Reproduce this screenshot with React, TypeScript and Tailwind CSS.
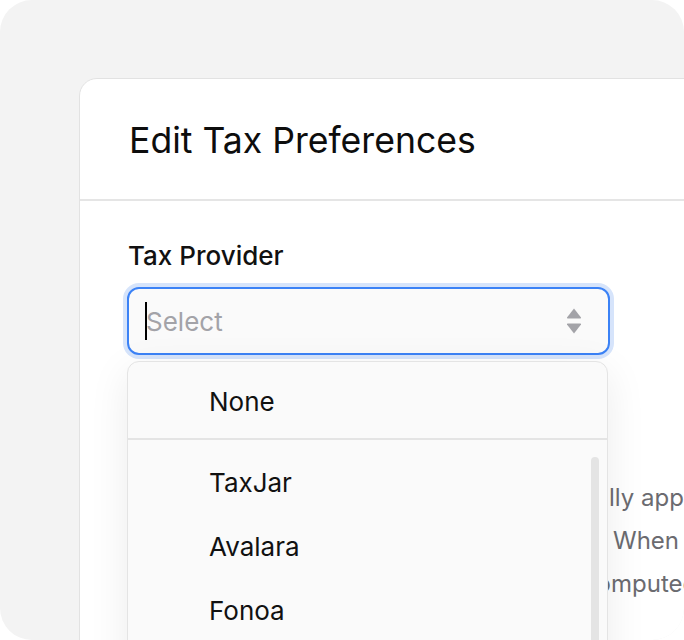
import React from "react";

const providers = ["TaxJar", "Avalara", "Fonoa"];

// the start of each line sits under the open dropdown
const descLines = [
  { lead: "Taxes are automatica", tail: "lly applied to every order", w: "w-[482px]" },
  { lead: "using the shipping address.", tail: "When enabled,", w: "w-[486px] pr-[14px]" },
  { lead: "rates are fetched and co", tail: "mputed at checkout", w: "w-[484px]" },
];

export default function App() {
  return (
    <div className="w-[684px] h-[640px] bg-white" style={{ fontFamily: "Inter, 'Noto Sans', sans-serif" }}>
      <div className="w-full h-full rounded-[32px] bg-[#f3f3f3] overflow-hidden pl-[79px] pt-[78px]">
        <div className="w-[720px] h-[700px] bg-white border border-[#e2e2e2] rounded-tl-[18px] overflow-hidden">
          <div className="h-[122px] flex items-center pl-[49px] border-b-2 border-[#e5e5e5]">
            <h1 className="text-[35.6px] text-[#0d0d0d] leading-[44px] mt-[4px]">Edit Tax Preferences</h1>
          </div>

          <div className="pl-[47px] pt-[38px]">
            <label className="block text-[26px] font-medium text-[#111111] leading-[34px] pl-[1px]">Tax Provider</label>

            <div className="relative mt-[14px] w-[483px]">
              <div className="h-[68px] rounded-[12px] border-2 border-[#3b82f6] bg-[#fafafa] ring-4 ring-[#d6e4fb] flex items-center pl-[16px] pr-[26px]">
                <span className="w-[2px] h-[38px] bg-black" />
                <span className="flex-1 text-[26px] text-[#a3a3a8] -ml-[1px]">Select</span>
                <svg width="16" height="28" viewBox="0 0 16 28" fill="#a3a3a8">
                  <path d="M8 1.5 L15 10.5 Q15.5 11.5 14 11.5 L2 11.5 Q0.5 11.5 1 10.5 Z" />
                  <path d="M8 26.5 L15 17.5 Q15.5 16.5 14 16.5 L2 16.5 Q0.5 16.5 1 17.5 Z" />
                </svg>
              </div>

              <div className="absolute left-0 right-[2px] top-[74px] z-10 h-[400px] rounded-[12px] border border-[#e4e4e4] bg-[#fafafa] shadow-[0_10px_40px_rgba(0,0,0,0.08)]">
                <div className="h-[78px] flex items-center pl-[81px] pt-[3px] border-b-2 border-[#e4e4e4] text-[26px] text-[#111111]">
                  None
                </div>
                <div className="relative pt-[10px]">
                  {providers.map((p) => (
                    <div key={p} className="h-[64px] flex items-center pl-[81px] text-[26px] text-[#111111]">
                      {p}
                    </div>
                  ))}
                  <div className="absolute right-[8px] top-[17px] w-[8px] h-[300px] rounded-full bg-[#e4e4e4]" />
                </div>
              </div>
            </div>

            <div className="mt-[121px] text-[24px] leading-[43px] text-[#6b6b70] whitespace-nowrap">
              {descLines.map((l) => (
                <div key={l.tail} className="flex">
                  <span className={`${l.w} shrink-0 text-right`}>{l.lead}</span>
                  <span className="shrink-0">{l.tail}</span>
                </div>
              ))}
            </div>
          </div>
        </div>
      </div>
    </div>
  );
}
